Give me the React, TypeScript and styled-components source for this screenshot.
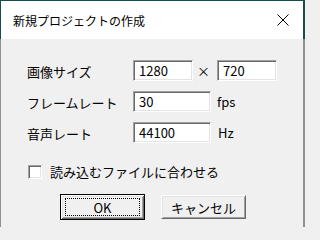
import React from 'react'
import styled, { createGlobalStyle } from 'styled-components'

const GlobalStyle = createGlobalStyle`
  html, body {
    margin: 0;
    padding: 0;
    background: #f0f0f0;
  }
  body {
    font-family: 'Noto Sans CJK JP', 'Noto Sans', sans-serif;
    color: #000;
  }
`

const Window = styled.div`
  width: 305px;
  height: 227px;
  box-sizing: border-box;
  display: flex;
  flex-direction: column;
  border-top: 1px solid #1c4b4b;
  overflow: hidden;
`

const TitleBar = styled.div`
  height: 38px;
  flex: none;
  display: flex;
  align-items: center;
  justify-content: space-between;
  background: #fff;
  padding-left: 12px;
  padding-right: 14px;
  border-left: 1px solid #1c4b4b;
  border-right: 2px solid #1c4b4b;
  font-size: 12px;
  box-sizing: border-box;
`

const CloseIcon = styled.svg`
  width: 12px;
  height: 12px;
  display: block;
`

const Body = styled.div`
  flex: 1;
  background: #f0f0f0;
  display: flex;
  flex-direction: column;
  padding: 20px 0 0 26px;
  border-left: 1px solid #8f8f8f;
  border-right: 2px solid #8f8f8f;
  font-size: 13px;
`

const Form = styled.div`
  display: grid;
  grid-template-columns: 106px auto;
  row-gap: 8px;
  align-items: center;
`

const Label = styled.div`
  line-height: 21px;
  padding-top: 2px;
`

const Fields = styled.div`
  display: flex;
  align-items: center;
`

const Edit = styled.div<{ $width: number }>`
  width: ${p => p.$width}px;
  height: 21px;
  box-sizing: border-box;
  background: #fff;
  border: 1px solid;
  border-color: #a0a0a0 #fff #fff #a0a0a0;
  box-shadow: inset 1px 1px #696969, inset -1px -1px #e3e3e3;
  padding-left: 5px;
  line-height: 19px;
  font-size: 13px;
`

const Unit = styled.span<{ $gap: number }>`
  margin-left: ${p => p.$gap}px;
  margin-right: ${p => (p.$gap === 4 ? 7 : 0)}px;
  font-size: 13px;
`

const CheckRow = styled.div`
  display: flex;
  align-items: center;
  gap: 8px;
  margin-top: 18px;
  margin-left: 1px;
`

const CheckBox = styled.div`
  width: 14px;
  height: 14px;
  box-sizing: border-box;
  background: #fff;
  border: 1px solid;
  border-color: #a0a0a0 #fff #fff #a0a0a0;
  box-shadow: inset 1px 1px #696969, inset -1px -1px #e3e3e3;
`

const Buttons = styled.div`
  display: flex;
  align-items: center;
  gap: 16px;
  margin-top: 13px;
  margin-left: 33px;
`

const Button = styled.div<{ $default?: boolean }>`
  width: 85px;
  height: ${p => (p.$default ? 26 : 24)}px;
  box-sizing: border-box;
  position: relative;
  display: flex;
  align-items: center;
  justify-content: center;
  background: #f0f0f0;
  border: 1px solid;
  border-color: ${p => (p.$default ? '#000' : '#fff #696969 #696969 #fff')};
  box-shadow: ${p =>
    p.$default
      ? 'inset 1px 1px #fff, inset -1px -1px #696969, inset 2px 2px #e3e3e3, inset -2px -2px #a0a0a0'
      : 'inset 1px 1px #e3e3e3, inset -1px -1px #a0a0a0'};
  font-size: 13px;
`

const Focus = styled.div`
  position: absolute;
  inset: 3px 4px;
  border: 1px dotted #000;
`

export default function App() {
  return (
    <>
      <GlobalStyle />
      <Window>
        <TitleBar>
          <span>新規プロジェクトの作成</span>
          <CloseIcon viewBox="0 0 12 12">
            <path d="M0.5 0.5 L11.5 11.5 M11.5 0.5 L0.5 11.5" stroke="#000" strokeWidth="1" fill="none" />
          </CloseIcon>
        </TitleBar>
        <Body>
          <Form>
            <Label>画像サイズ</Label>
            <Fields>
              <Edit $width={60}>1280</Edit>
              <Unit $gap={4}>×</Unit>
              <Edit $width={60}>720</Edit>
            </Fields>
            <Label>フレームレート</Label>
            <Fields>
              <Edit $width={78}>30</Edit>
              <Unit $gap={6}>fps</Unit>
            </Fields>
            <Label>音声レート</Label>
            <Fields>
              <Edit $width={78}>44100</Edit>
              <Unit $gap={7}>Hz</Unit>
            </Fields>
          </Form>
          <CheckRow>
            <CheckBox />
            <span>読み込むファイルに合わせる</span>
          </CheckRow>
          <Buttons>
            <Button $default>
              <Focus />
              OK
            </Button>
            <Button>キャンセル</Button>
          </Buttons>
        </Body>
      </Window>
    </>
  )
}
